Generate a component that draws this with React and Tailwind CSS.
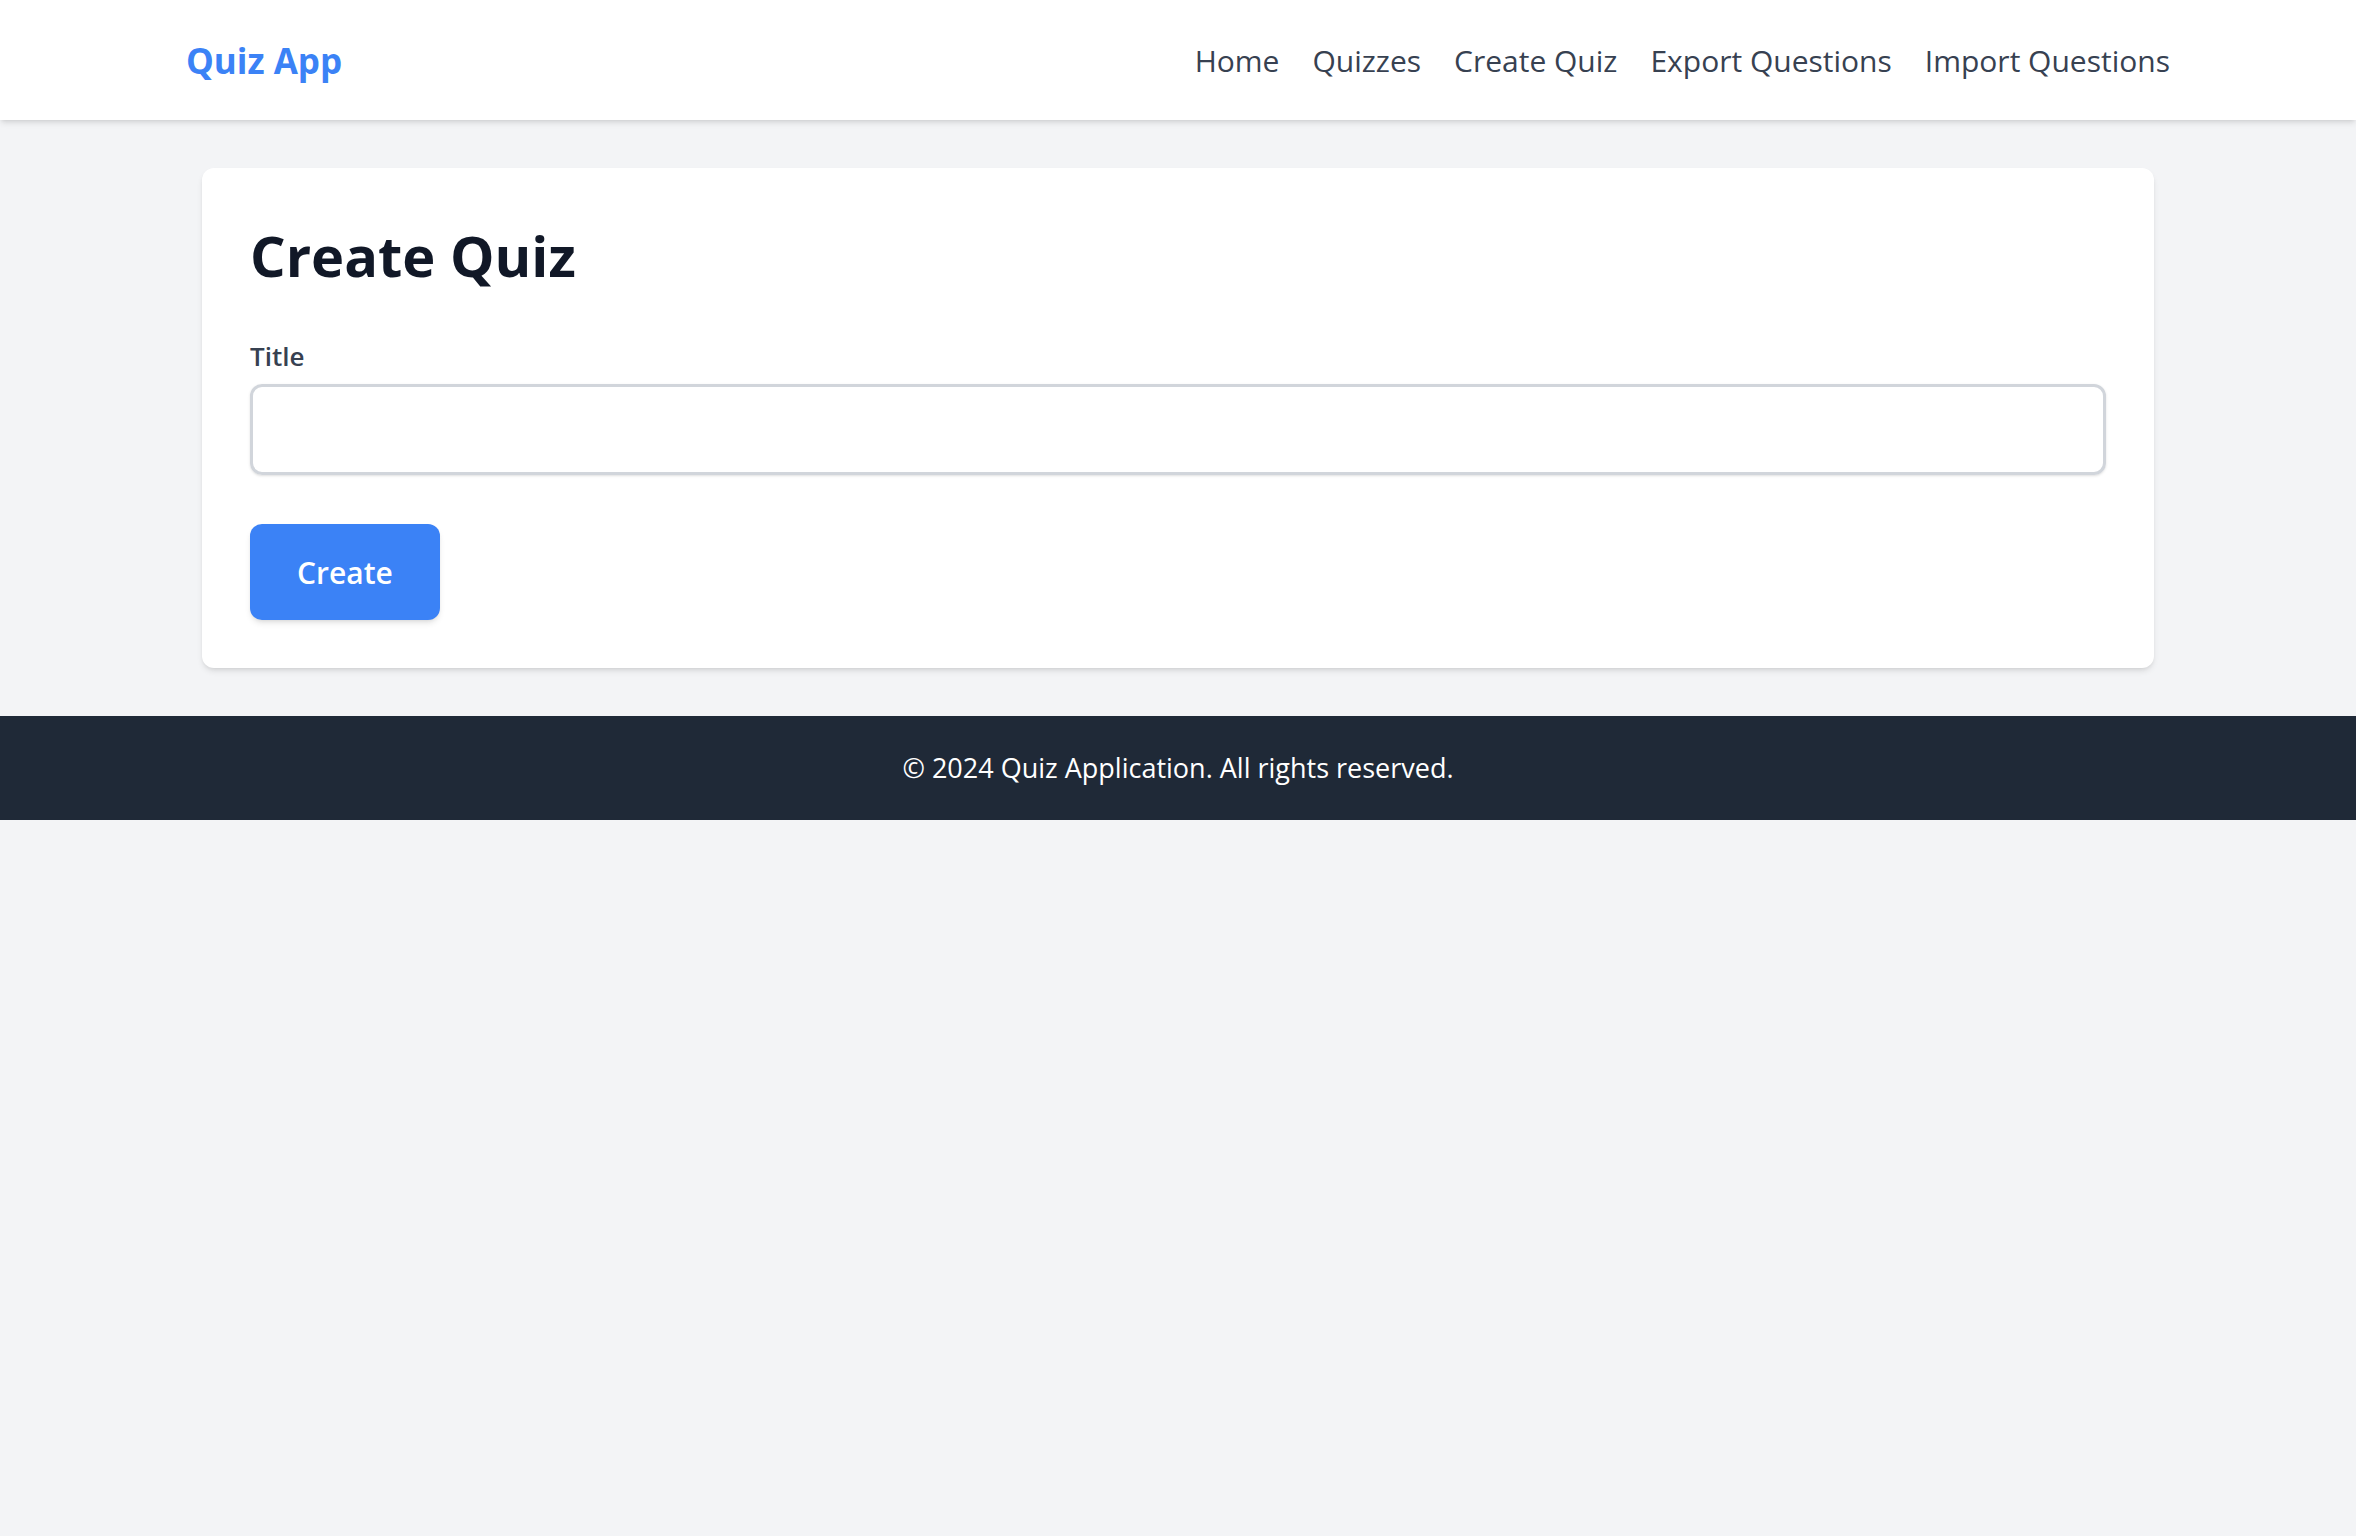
import React, { useState } from "react";

function Navbar() {
  const links = ["Home", "Quizzes", "Create Quiz", "Export Questions", "Import Questions"];
  return (
    <nav className="bg-white shadow-md">
      <div className="mx-[186px] h-[120px] pt-[2px] flex items-center justify-between">
        <a href="#" className="text-[35px] font-bold text-[#3b82f6] leading-[48px]">
          Quiz App
        </a>
        <div className="flex items-center gap-[33px] text-[30px] text-[#374151] leading-[48px]">
          {links.map((l) => (
            <a key={l} href="#" className="hover:text-[#3b82f6]">
              {l}
            </a>
          ))}
        </div>
      </div>
    </nav>
  );
}

function CreateQuiz() {
  const [title, setTitle] = useState("");
  return (
    <div className="bg-white rounded-[12px] shadow-md p-[48px]">
      <h1 className="text-[56px] font-bold text-[#111827] leading-[78px]">Create Quiz</h1>
      <form onSubmit={(e) => e.preventDefault()}>
        <label htmlFor="title" className="block mt-[44px] text-[26px] font-semibold text-[#374151] leading-[36px]">
          Title
        </label>
        <input
          id="title"
          type="text"
          value={title}
          onChange={(e) => setTitle(e.target.value)}
          className="block w-full mt-[10px] h-[91px] border-[3px] border-[#d1d5db] rounded-[12px] px-[18px] text-[26px] shadow-sm focus:outline-none"
        />
        <button
          type="submit"
          className="mt-[49px] h-[96px] w-[190px] bg-[#3b82f6] text-white text-[30px] font-semibold rounded-[12px] shadow-md"
        >
          Create
        </button>
      </form>
    </div>
  );
}

export default function App() {
  return (
    <div className="min-h-screen bg-[#f3f4f6] font-['Segoe_UI','Open_Sans',sans-serif]">
      <Navbar />
      <main className="mx-[202px] py-[48px]">
        <CreateQuiz />
      </main>
      <footer className="bg-[#1f2937] h-[104px] flex items-center justify-center">
        <p className="text-white text-[27px]">© 2024 Quiz Application. All rights reserved.</p>
      </footer>
    </div>
  );
}
